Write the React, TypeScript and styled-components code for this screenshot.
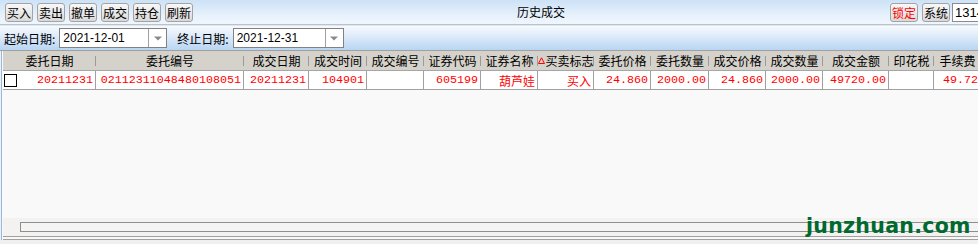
import React from "react";
import styled, { createGlobalStyle } from "styled-components";

const Global = createGlobalStyle`
  html, body { margin: 0; padding: 0; overflow: hidden; background: #f0f0f0; }
  body { width: 978px; height: 244px; }
`;

const CJK = `"Noto Sans CJK SC", "Liberation Sans", sans-serif`;

const Win = styled.div`
  width: 1010px;
  height: 244px;
  display: flex;
  flex-direction: column;
  font-family: ${CJK};
  font-size: 12px;
  color: #000;
  position: relative;
`;

const Toolbar = styled.div`
  height: 25px;
  box-sizing: border-box;
  display: flex;
  align-items: center;
  padding: 0 0 0 5px;
  background: linear-gradient(#cde2f7, #e9f2fc 70%, #eef5fd);
  border-bottom: 1px solid #b9c3cc;
`;

const BtnGroup = styled.div`
  display: flex;
  gap: 4px;
  align-items: center;
`;

const Btn = styled.button<{ $red?: boolean }>`
  width: 28px;
  height: 19px;
  padding: 0;
  margin: 0;
  box-sizing: border-box;
  border: 1px solid #a3a3a3;
  border-radius: 3px;
  background: linear-gradient(#f8f8f8, #e6e6e6 60%, #d9d9d9);
  font-family: ${CJK};
  font-size: 12px;
  line-height: 17px;
  color: ${(p) => (p.$red ? "#ff0000" : "#000")};
`;

const Title = styled.div`
  margin-left: 324px;
  font-size: 12px;
  line-height: 14px;
`;

const Spacer = styled.div`
  flex: 1;
`;

const CodeInput = styled.div`
  margin-left: 2px;
  width: 58px;
  height: 19px;
  box-sizing: border-box;
  border: 1px solid #8c8c8c;
  background: #fff;
  font-family: "Liberation Sans", sans-serif;
  font-size: 13px;
  line-height: 17px;
  padding-left: 2px;
`;

const DateBar = styled.div`
  height: 26px;
  box-sizing: border-box;
  display: flex;
  align-items: center;
  padding-left: 4px;
  background: linear-gradient(#f7fafd, #dceafa 45%, #b8d5f2);
  border-top: 1px solid #dfe6ee;
  border-bottom: 1px solid #a0a0a0;
`;

const Label = styled.span<{ $gap?: number }>`
  margin-left: ${(p) => p.$gap ?? 0}px;
  margin-right: 4px;
  font-size: 12px;
  white-space: nowrap;
`;

const DateBox = styled.div<{ $w: number }>`
  width: ${(p) => p.$w}px;
  height: 20px;
  box-sizing: border-box;
  border: 1px solid #828282;
  background: #fff;
  display: flex;
  align-items: stretch;
`;

const DateText = styled.div`
  flex: 1;
  font-family: "Liberation Sans", sans-serif;
  font-size: 12px;
  line-height: 18px;
  padding-left: 3px;
`;

const Drop = styled.div`
  width: 17px;
  border-left: 1px solid #a0a0a0;
  display: flex;
  align-items: center;
  justify-content: center;
`;

const Panel = styled.div`
  flex: 1;
  display: flex;
  flex-direction: column;
  margin-left: 1px;
  border-left: 1px solid #94b8df;
  padding-left: 1px;
  background: #f9f9f9;
`;

const cols = "93px 148px 65px 58px 57px 57px 57px 56px 57px 58px 57px 57px 66px 45px 47px 60px";

const HeadRow = styled.div`
  display: grid;
  grid-template-columns: ${cols};
  height: 20px;
  box-sizing: border-box;
  background: #d5d2cb;
  border-bottom: 1px solid #a6a6a6;
`;

const HeadCell = styled.div`
  display: flex;
  align-items: center;
  justify-content: center;
  font-size: 12px;
  line-height: 19px;
  white-space: nowrap;
  overflow: hidden;
  background: linear-gradient(#9a9a9a, #9a9a9a) no-repeat right 0 center / 1px 10px;
`;

const DataRow = styled.div`
  display: grid;
  grid-template-columns: ${cols};
  height: 19px;
  box-sizing: border-box;
  background: #fff;
  border-bottom: 1px solid #a0a0a0;
`;

const Cell = styled.div<{ $cjk?: boolean }>`
  display: flex;
  align-items: center;
  justify-content: flex-end;
  padding-right: 2px;
  border-right: 1px solid #a0a0a0;
  color: #ff0000;
  font-family: ${(p) => (p.$cjk ? CJK : `"Liberation Mono", monospace`)};
  font-size: ${(p) => (p.$cjk ? "12px" : "11.7px")};
  white-space: nowrap;
  overflow: hidden;
`;

const FirstCell = styled(Cell)`
  justify-content: space-between;
  padding-left: 1px;
`;

const Check = styled.span`
  width: 13px;
  height: 13px;
  box-sizing: border-box;
  border: 1px solid #000;
  background: #fff;
`;

const Empty = styled.div`
  flex: 1;
`;

const ScrollArea = styled.div`
  height: 19px;
  box-sizing: border-box;
  background: #f3f2f0;
  display: flex;
  align-items: flex-start;
  padding: 4px 0 0 17px;
  border-bottom: 1px solid #a0a0a0;
`;

const Track = styled.div`
  flex: 1;
  height: 10px;
  box-sizing: border-box;
  border: 1px solid #8e8e8e;
  background: #f4f4f4;
`;

const BottomEdge = styled.div`
  border-top: 1px solid #f6f6f6;
  border-bottom: 1px solid #a0a0a0;
  box-sizing: border-box;
  height: 3px;
`;

const Tail = styled.div`
  height: 4px;
  background: #f0f0f0;
`;

const Watermark = styled.div`
  position: absolute;
  left: 806px;
  top: 214px;
  font-family: "DejaVu Sans", sans-serif;
  font-weight: bold;
  font-size: 20.5px;
  letter-spacing: 0.3px;
  color: #00692f;
  line-height: 24px;
`;

const Tri = styled.svg`
  width: 7px;
  height: 7px;
`;

const heads = [
  "委托日期",
  "委托编号",
  "成交日期",
  "成交时间",
  "成交编号",
  "证券代码",
  "证券名称",
  "买卖标志",
  "委托价格",
  "委托数量",
  "成交价格",
  "成交数量",
  "成交金额",
  "印花税",
  "手续费",
  "",
];

const row: { v: string; cjk?: boolean }[] = [
  { v: "02112311048480108051" },
  { v: "20211231" },
  { v: "104901" },
  { v: "" },
  { v: "605199" },
  { v: "葫芦娃", cjk: true },
  { v: "买入", cjk: true },
  { v: "24.860" },
  { v: "2000.00" },
  { v: "24.860" },
  { v: "2000.00" },
  { v: "49720.00" },
  { v: "" },
  { v: "49.72" },
  { v: "" },
];

const Arrow = () => (
  <svg width="8" height="5" viewBox="0 0 8 5">
    <path d="M0 0.5 H8 L4 4.5 Z" fill="#8a8a8a" />
  </svg>
);

export default function App() {
  return (
    <Win>
      <Global />
      <Toolbar>
        <BtnGroup>
          {["买入", "卖出", "撤单", "成交", "持仓", "刷新"].map((t) => (
            <Btn key={t}>{t}</Btn>
          ))}
        </BtnGroup>
        <Title>历史成交</Title>
        <Spacer />
        <BtnGroup>
          <Btn $red>锁定</Btn>
          <Btn>系统</Btn>
        </BtnGroup>
        <CodeInput>1314</CodeInput>
      </Toolbar>
      <DateBar>
        <Label>起始日期:</Label>
        <DateBox $w={108}>
          <DateText>2021-12-01</DateText>
          <Drop>
            <Arrow />
          </Drop>
        </DateBox>
        <Label $gap={10}>终止日期:</Label>
        <DateBox $w={111}>
          <DateText>2021-12-31</DateText>
          <Drop>
            <Arrow />
          </Drop>
        </DateBox>
      </DateBar>
      <Panel>
        <HeadRow>
          {heads.map((h, i) => (
            <HeadCell key={i}>
              {h === "买卖标志" && (
                <Tri viewBox="0 0 7 7">
                  <path d="M3.5 0.8 L6.5 6.5 H0.5 Z" fill="none" stroke="#ff0000" strokeWidth="1" />
                </Tri>
              )}
              {h}
            </HeadCell>
          ))}
        </HeadRow>
        <DataRow>
          <FirstCell>
            <Check />
            20211231
          </FirstCell>
          {row.map((c, i) => (
            <Cell key={i} $cjk={c.cjk}>
              {c.v}
            </Cell>
          ))}
        </DataRow>
        <Empty />
        <ScrollArea>
          <Track />
        </ScrollArea>
        <BottomEdge />
      </Panel>
      <Tail />
      <Watermark>junzhuan.com</Watermark>
    </Win>
  );
}
